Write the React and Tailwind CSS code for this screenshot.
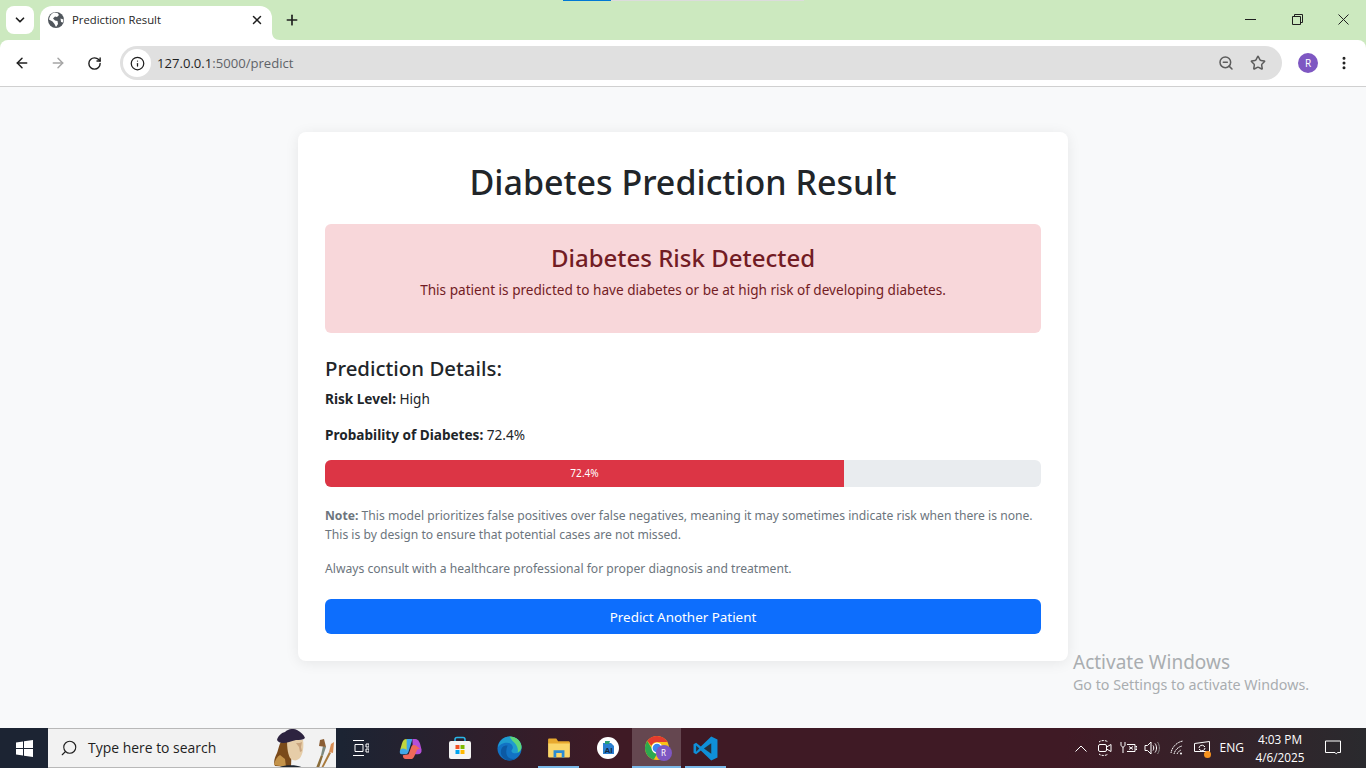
import { ArrowLeft, ArrowRight, RotateCw, Info, ZoomOut, Star, EllipsisVertical, ChevronDown, Plus, X, Search } from 'lucide-react';

const WindowsLogo = () => (
  <svg width="17" height="17" viewBox="0 0 17 17" fill="#fff">
    <path d="M0 2.400 7 1.400V8H0zM8 1.300 17 0v8H8zM0 9h7v6.600l-7-1zM8 9h9v8l-9-1.300z" />
  </svg>
);

const GlobeFilled = () => (
  <svg width="16" height="16" viewBox="0 0 16 16">
    <circle cx="8" cy="8" r="8" fill="#50565c" />
    <path d="M6 .5 9.500 1 11 3 9 5 7 4.500 5 6.500 7 8.500 9.500 9 10 12 8 15 6.500 12 4.500 9.500 1 7.500C1.500 4 3.500 1.500 6 .5zM12.500 6.500 15.500 7.500 15 10.500 13 10z" fill="#fff" />
  </svg>
);

const CopilotIcon = () => (
  <svg width="23" height="23" viewBox="0 0 24 24">
    <path d="M8 2h6l-4 13c-.6 2-2 3-4 3H3C1 18 .5 16 1 14z" fill="#3fa9e8" />
    <path d="M8 2c-3 0-4 2-5 5L1 14c2-3 6-2 7 0z" fill="#c2d63c" />
    <path d="M14 2h3c2 0 4 2 5 5l1.500 6c.5 3-1 5-4 5h-5z" fill="#b44fd8" />
    <path d="M10 18l3-8c1-2 3-2 5-1l5 4c-1-1-2-1-4 0l-3 7c-1 2-2 3-4 3H7c-2 0-3-2-3-4z" fill="#ef6a5a" />
  </svg>
);

const StoreIcon = () => (
  <svg width="24" height="24" viewBox="0 0 24 24">
    <path d="M7 6V3.500C7 2 8 1.500 9 1.500h6c1 0 2 .5 2 2V6" fill="none" stroke="#29b6e8" strokeWidth="1.500" />
    <rect x="1" y="5" width="22" height="18" rx="2" fill="#f4f4f4" />
    <rect x="7.500" y="9" width="4" height="4" fill="#f25022" />
    <rect x="12.500" y="9" width="4" height="4" fill="#7fba00" />
    <rect x="7.500" y="14" width="4" height="4" fill="#00a4ef" />
    <rect x="12.500" y="14" width="4" height="4" fill="#ffb900" />
  </svg>
);

const EdgeIcon = () => (
  <svg width="25" height="25" viewBox="0 0 26 26">
    <circle cx="13" cy="13" r="12.500" fill="#1272c4" />
    <path d="M1 12C2 5 7 .5 13 .5c7 0 12.500 5 12.500 11 0 4-3 6.500-6.500 6.500-2 0-4-1-4-2.500 0-1 1.500-1.500 1.500-3.500 0-3-3-5-6-5-4 0-8 2-9.500 5z" fill="#1f9ccf" />
    <path d="M13 .5c7 0 12.500 5 12.500 11 0 3-2 5-4 6 1-4-1-9-5-12-1-1-2-3-3.500-5z" fill="#5fd67a" />
    <path d="M10 10c-3 0-6 2-6 7 0 4 4 8.500 9 8.500 2 0 4-.5 6-2-3 1-7 0-8.500-3-1.500-3-1-7 .5-10.500z" fill="#0c59a4" />
  </svg>
);

const FolderIcon = () => (
  <svg width="22" height="20" viewBox="0 0 24 22">
    <path d="M0 2c0-1 .5-1.500 1.500-1.500H9l2 3h11c1 0 2 .5 2 1.500v2H0z" fill="#e8a92e" />
    <path d="M0 6h24v14c0 1-.5 1.500-1.500 1.500h-21C.5 21.500 0 21 0 20z" fill="#fbd669" />
    <path d="M6 21.500v-8h12v8h-3v-5H9v5z" fill="#2a8bd4" />
  </svg>
);

const WordAiIcon = () => (
  <svg width="22" height="22" viewBox="0 0 22 22">
    <circle cx="11" cy="11" r="11" fill="#fff" />
    <path d="M6 6h8l3 3v8H6z" fill="#2a7fd0" />
    <path d="M8 4h5l-1 3H8z" fill="#2aa076" />
    <text x="11.500" y="16" fontSize="8" fontWeight="700" fontFamily="Liberation Sans, sans-serif" fill="#12263f" textAnchor="middle">AI</text>
  </svg>
);

const ChromeIcon = () => (
  <div className="relative h-6 w-6">
    <svg width="24" height="24" viewBox="0 0 24 24">
      <circle cx="12" cy="12" r="12" fill="#fbc116" />
      <path d="M12 0a12 12 0 0 1 10.400 6H12a6 6 0 0 0-5.600 3.800L2.300 5A12 12 0 0 1 12 0z" fill="#e33b2e" />
      <path d="M2.300 5l5 8.600a5 5 0 0 0 5 4l-3.500 6A12 12 0 0 1 2.300 5z" fill="#2da94f" />
      <circle cx="12" cy="12" r="5.500" fill="#fff" />
      <circle cx="12" cy="12" r="4.300" fill="#3c85f0" />
    </svg>
    <div className="absolute left-[11px] top-[9px] flex h-4 w-4 items-center justify-center rounded-full bg-[#7e57c2] text-[8px] leading-none text-white">R</div>
  </div>
);

const VsCodeIcon = () => (
  <svg width="25" height="25" viewBox="0 0 24 24">
    <path d="M17.500 0.500 23.500 3.300v17.400L17.500 23.500 7.500 14 3 17.500.500 16V8L3 6.500 7.500 10z" fill="#0f8fd8" />
    <path d="M17.500 7 10.500 12l7 5z" fill="#25303c" />
    <path d="M3 9v6l3-3z" fill="#25303c" />
  </svg>
);

// the little renaissance painter in the search box
const Painter = () => (
  <svg width="64" height="40" viewBox="0 0 64 40">
    <path d="M3 38c-2-4 0-9 2-13 2-5 2-10 6-13l9 2-1 25z" fill="#7a4a1a" />
    <path d="M2 37c1-5 3-8 6-10l5 4 1 8z" fill="#c4934a" />
    <path d="M6 40c3-3 20-4 25 0z" fill="#1c2530" />
    <path d="M15 12h16c1 6 0 14-3 18-3 3-6 3-9 1-3-3-4-11-4-19z" fill="#e6cda8" />
    <path d="M24 15c2 0 5 0 6-1l-1 5 1 4-2 1-1-5z" fill="#c9a47e" />
    <path d="M5 12C6 8 9 5 13 4 16 1 21 0 25 2 29 4 32 7 33 10 31 12 28 12 24 12 19 13 15 15 11 15 8 15 6 14 5 12z" fill="#2d2340" />
    <path d="M44 40l5-13 2 1-4 12z" fill="#8a6d3a" />
    <path d="M49 27l2-9 3 1-3 9z" fill="#7d8a80" />
    <path d="M47 18l1-6 4-1 2 8z" fill="#8b5e34" />
    <path d="M49 40l8-16 2 1-8 15z" fill="#a97a3c" />
    <path d="M57 24l2-8 3-2-1 11z" fill="#d98f55" />
  </svg>
);

const TaskViewIcon = () => (
  <svg width="16" height="16" viewBox="0 0 16 16" fill="none" stroke="#fff">
    <path d="M0 .5h11M0 15.500h11M2 4.500h8v7H2zM13 4h3v3h-3zM13 9h3v3h-3z" />
  </svg>
);

const TrayVideo = () => (
  <svg width="16" height="18" viewBox="0 0 16 18" fill="none" stroke="#fff">
    <path d="M2 3c2-2 7-2 9 0M2 15c2 2 7 2 9 0" strokeDasharray="2 1" />
    <rect x="1.500" y="5.500" width="8" height="7" rx="1.500" />
    <path d="M9.500 8 14 5.500v7L9.500 10" />
  </svg>
);

const TrayPower = () => (
  <svg width="17" height="14" viewBox="0 0 17 14" fill="none" stroke="#fff">
    <path d="M1 1v3c0 1 1 2 2 2s2-1 2-2V1M3 6v6M7 3.500h8v7H7M15.500 5.500h1.500v3h-1.500M9 5.500l4 3M13 5.500l-4 3" />
  </svg>
);

const TrayVolume = () => (
  <svg width="16" height="16" viewBox="0 0 16 16" fill="none" stroke="#fff">
    <path d="M1 5.500h2.500L7 2v12L3.500 10.500H1zM9 5.500c1 1.500 1 3.500 0 5M11 3.500c2 2.500 2 6.500 0 9" />
    <path d="M13.500 2c2.500 3.500 2.500 8.500 0 12" stroke="#8a8a8a" />
  </svg>
);

const TrayWifi = () => (
  <svg width="16" height="16" viewBox="0 0 16 16" fill="none" stroke="#fff">
    <path d="M1 13C2 7 7 2 13 1M4 14c1-4 4-7 8-8M7 14c1-2 2-3 4-4" strokeDasharray="1.500 .5" />
    <circle cx="11" cy="13.500" r="1" fill="#fff" stroke="none" />
  </svg>
);

const TraySync = () => (
  <div className="relative">
    <svg width="16" height="14" viewBox="0 0 16 14" fill="none" stroke="#fff">
      <path d="M.5 2.500 15.500.5v10H.5zM5 7a3 3 0 0 1 5-2l1 1M11 7a3 3 0 0 1-5 2L5 8" />
    </svg>
    <div className="absolute -bottom-[3px] -right-[1px] h-[7px] w-[7px] rounded-full bg-[#f7931e]" />
  </div>
);

const TrayIcon = ({ children, className = 'w-6' }) => (
  <div className={`flex items-center justify-center text-white ${className}`}>{children}</div>
);

const TaskIcon = ({ children, active, open, className = 'w-[49px]', barClass = 'inset-x-[4px]' }) => (
  <div className={`relative flex h-full items-center justify-center ${className} ${active ? 'bg-white/20' : ''}`}>
    {children}
    {open && <div className={`absolute bottom-0 h-[2px] bg-[#7ab8e8] ${barClass}`} />}
  </div>
);

export default function App() {
  return (
    <div className="relative flex h-screen w-full flex-col overflow-hidden bg-[#cce9bf] font-['Noto_Sans',sans-serif] text-[#212529]">
      {/* tab strip */}
      <div className="relative flex h-10 shrink-0 items-end">
        <div className="mb-[6px] ml-[6px] flex h-[28px] w-[28px] items-center justify-center rounded-lg bg-white">
          <ChevronDown size={14} strokeWidth={3} className="text-[#1f1f1f]" />
        </div>
        <div className="relative ml-[6px] flex h-[34px] w-[232px] items-center rounded-t-xl bg-white pb-[6px] pl-2 pr-2">
          <GlobeFilled />
          <span className="ml-2 font-['Open_Sans',sans-serif] text-[11.3px] text-[#1f1f1f]">Prediction Result</span>
          <X size={14} strokeWidth={2.5} className="ml-auto text-[#1f1f1f]" />
          <svg width="8" height="8" viewBox="0 0 8 8" className="absolute -right-2 bottom-0" fill="#fff"><path d="M0 0c0 5 3 8 8 8H0z" /></svg>
        </div>
        <div className="mb-[6px] ml-[6px] flex h-[28px] w-[28px] items-center justify-center">
          <Plus size={16} strokeWidth={2.5} className="text-[#1f1f1f]" />
        </div>
        <div className="absolute left-[563px] top-0 h-px w-[48px] bg-[#0078d4]" />
        <div className="absolute left-[611px] top-0 h-px w-[193px] bg-[#dcdcdc]" />
        <div className="mb-[15px] ml-auto flex items-center pr-[17px]">
          <svg width="11" height="11" viewBox="0 0 11 11" fill="none" stroke="#1f1f1f" className="mr-[36px]"><path d="M0 5.500h11" /></svg>
          <svg width="11" height="11" viewBox="0 0 11 11" fill="none" stroke="#1f1f1f" className="mr-[35px]">
            <path d="M.5 2.500h8v8h-8zM2.500 2.500V.5h8v8H8.500" />
          </svg>
          <svg width="11" height="11" viewBox="0 0 11 11" fill="none" stroke="#1f1f1f"><path d="M.5.5l10 10M10.500.5l-10 10" /></svg>
        </div>
      </div>

      {/* toolbar */}
      <div className="flex h-[47px] shrink-0 items-center rounded-t-lg border-b border-[#d0d0d0] bg-white pl-[14px] pr-[13px]">
        <ArrowLeft size={16} strokeWidth={2.25} className="text-[#1f1f1f]" />
        <ArrowRight size={16} strokeWidth={2.25} className="ml-5 text-[#a5a5a5]" />
        <RotateCw size={15} strokeWidth={2.25} className="ml-[21px] text-[#1f1f1f]" />
        <div className="ml-[18px] flex h-[34px] w-[1162px] items-center rounded-full bg-[#e0e0e0] pl-[3px] pr-[16px]">
          <div className="flex h-7 w-7 items-center justify-center rounded-full bg-white">
            <Info size={15} strokeWidth={2} className="text-[#1f1f1f]" />
          </div>
          <span className="ml-[6px] pt-px font-['Open_Sans',sans-serif] text-[13.1px] text-[#1f1f1f]">
            127.0.0.1<span className="text-[#5f6368]">:5000/predict</span>
          </span>
          <ZoomOut size={16} strokeWidth={2.25} className="ml-auto text-[#5c5c5c]" />
          <Star size={16} strokeWidth={2.25} className="ml-4 text-[#5c5c5c]" />
        </div>
        <div className="ml-4 flex h-5 w-5 items-center justify-center rounded-full bg-[#7e57c2] text-[10px] text-white">R</div>
        <EllipsisVertical size={16} strokeWidth={2.5} className="ml-[18px] text-[#1f1f1f]" />
      </div>

      {/* page */}
      <main className="relative min-h-0 flex-1 bg-[#f8f9fa] pt-[45px]">
        <div className="mx-auto w-[770px] rounded-lg bg-white p-[27px] shadow-[0_2px_14px_rgba(0,0,0,0.08)]">
          <h1 className="mb-[18px] text-center text-[34px] font-medium leading-[47px]">Diabetes Prediction Result</h1>
          <div className="rounded-md bg-[#f8d7da] px-[18px] pb-[32px] pt-[19px] text-center text-[#721c24]">
            <h3 className="mb-[6px] text-[24px] font-medium leading-[30px]">Diabetes Risk Detected</h3>
            <p className="text-[13.6px] leading-[22px]">This patient is predicted to have diabetes or be at high risk of developing diabetes.</p>
          </div>
          <h4 className="mb-[7px] mt-[22px] text-[20.4px] font-medium leading-[26px]">Prediction Details:</h4>
          <p className="mb-[14px] text-[13.6px] leading-[22px]"><strong className="font-bold">Risk Level:</strong> High</p>
          <p className="mb-[14px] text-[13.6px] leading-[22px]"><strong className="font-bold">Probability of Diabetes:</strong> 72.4%</p>
          <div className="mb-[19px] flex h-[27px] overflow-hidden rounded-md bg-[#e9ecef]">
            <div className="flex w-[72.5%] items-center justify-center bg-[#dc3545] text-[10.1px] text-white">72.4%</div>
          </div>
          <p className="mb-[15px] text-[12.15px] leading-[19px] text-[#6c757d]">
            <strong className="font-bold">Note:</strong> This model prioritizes false positives over false negatives, meaning it may sometimes indicate risk when there is none. This is by design to ensure that potential cases are not missed.
          </p>
          <p className="mb-[21px] text-[12.15px] leading-[19px] text-[#6c757d]">Always consult with a healthcare professional for proper diagnosis and treatment.</p>
          <button className="block h-[35px] w-full rounded-md bg-[#0d6efd] pt-px text-center text-[13.4px] text-white">Predict Another Patient</button>
        </div>
        <div className="absolute left-[1073px] top-[562px] text-[#a9adb0]">
          <div className="text-[19px] leading-[26px]">Activate Windows</div>
          <div className="text-[14.25px] leading-[20px]">Go to Settings to activate Windows.</div>
        </div>
      </main>

      {/* taskbar */}
      <div className="flex h-10 shrink-0 items-center bg-[linear-gradient(90deg,#1c2433_25%,#3f1a25_45%,#3f1a25_78%,#2a2a2e_100%)] text-white">
        <div className="flex h-full w-12 items-center justify-center"><WindowsLogo /></div>
        <div className="flex h-full w-[288px] items-center overflow-hidden border-y border-[#b8b8b8] bg-[#f2f2f2] pl-[12px] text-[#1f1f1f]">
          <Search size={18} strokeWidth={1.5} className="-scale-x-100" />
          <span className="ml-[10px] font-['Open_Sans',sans-serif] text-[13.95px]">Type here to search</span>
          <div className="ml-auto"><Painter /></div>
        </div>
        <TaskIcon className="w-[50px]"><TaskViewIcon /></TaskIcon>
        <TaskIcon><CopilotIcon /></TaskIcon>
        <TaskIcon><StoreIcon /></TaskIcon>
        <TaskIcon className="w-[50px]"><EdgeIcon /></TaskIcon>
        <TaskIcon open><FolderIcon /></TaskIcon>
        <TaskIcon><WordAiIcon /></TaskIcon>
        <TaskIcon open active barClass="inset-x-0"><ChromeIcon /></TaskIcon>
        <TaskIcon open><VsCodeIcon /></TaskIcon>

        <div className="ml-auto flex h-full items-center">
          <TrayIcon>
            <svg width="12" height="7" viewBox="0 0 12 7" fill="none" stroke="#fff"><path d="M.5 6.500 6 1l5.500 5.500" /></svg>
          </TrayIcon>
          <TrayIcon><TrayVideo /></TrayIcon>
          <TrayIcon><TrayPower /></TrayIcon>
          <TrayIcon className="w-[23px]"><TrayVolume /></TrayIcon>
          <TrayIcon className="ml-[2px] w-6"><TrayWifi /></TrayIcon>
          <TrayIcon><TraySync /></TrayIcon>
          <span className="ml-[6px] font-['Open_Sans',sans-serif] text-[12px]">ENG</span>
          <div className="ml-[10px] flex w-[52px] flex-col items-center font-['Open_Sans',sans-serif] text-[11.8px] leading-[18px]">
            <span>4:03 PM</span>
            <span>4/6/2025</span>
          </div>
          <div className="ml-[19px] mr-[25px]">
            <svg width="16" height="16" viewBox="0 0 16 16" fill="none" stroke="#fff"><path d="M.5 1h15v11.500h-3c-.5 1.500-2 1.500-2.500 0H.5z" /></svg>
          </div>
        </div>
      </div>
    </div>
  );
}
